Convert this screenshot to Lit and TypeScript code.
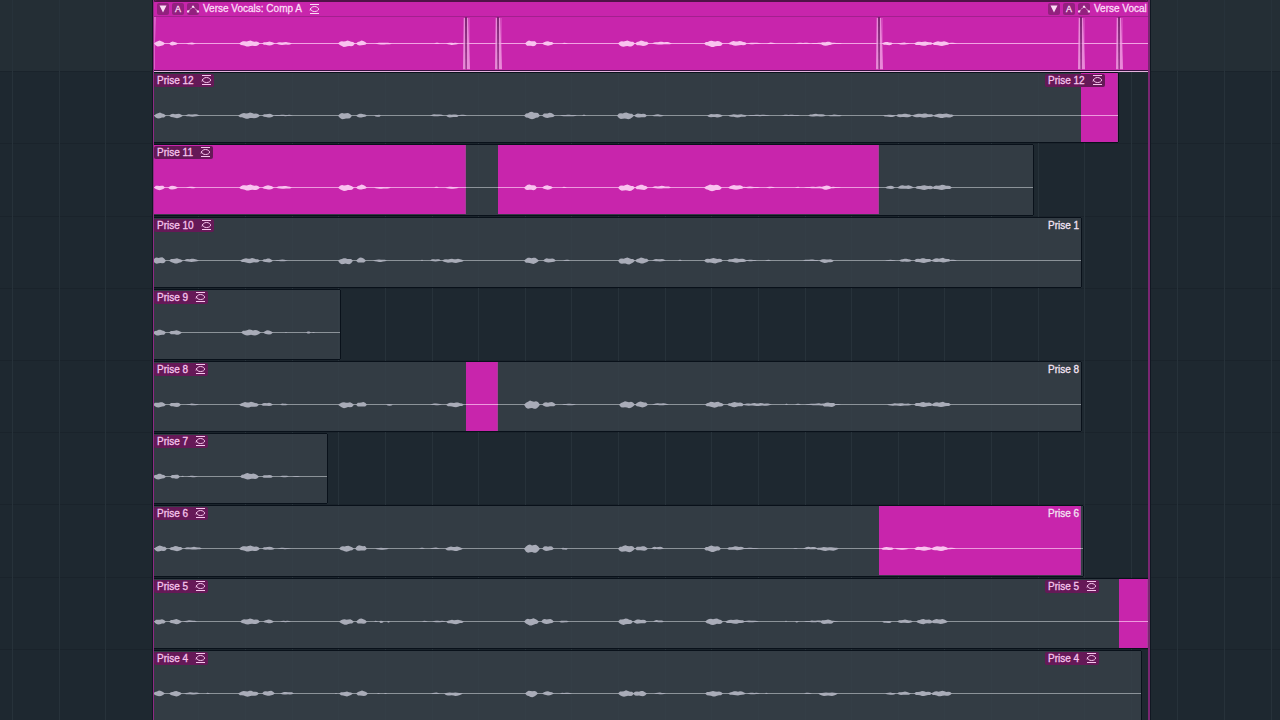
import { LitElement, html, svg, css, nothing } from "lit";
import { customElement, property } from "lit/decorators.js";

/** A burst of sound: start, end, height above and below the centre line. */
type Burst = [number, number, number, number];
type Range = [number, number];

interface Take {
  name: string;
  end: number;
  picked: Range[];
  repeat?: { text: string; tagged: boolean };
  bursts: Burst[];
}

/* Timeline units: the group runs from 154 to 1148, the loop restarts at 1046. */
const START = 154;
const END = 1148;
const SPAN = END - START;
const REPEAT = 1046;

const COMP: Burst[] = [
  [154, 165, 3, 3], [169, 178, 2, 2], [186, 196, 1, 1], [239, 260, 3, 3], [262, 275, 2, 2], [276, 292, 1.6, 1.4],
  [338, 355, 3, 3.5], [356, 367, 3, 2], [375, 392, 1, 1], [434, 440, 1, 0.5], [446, 459, 1, 1.3],
  [525, 537, 3.2, 3], [542, 554, 2.4, 2], [562, 568, 1, 0.5], [618, 635, 3, 3.5], [635, 649, 3, 2.5], [652, 672, 2, 1],
  [704, 723, 3, 3.5], [728, 747, 2.8, 2.2], [747, 761, 1, 0.7], [767, 776, 1, 0.5], [795, 811, 1, 0.5], [811, 842, 1, 0.7], [820, 833, 2, 2.2],
  [882, 893, 1.7, 1.7], [897, 910, 1, 1], [914, 933, 2.2, 2.2], [932, 950, 2.5, 2.3], [945, 957, 1, 0.5],
];

const TAKES: Take[] = [
  {
    name: "Prise 12", end: 1118, picked: [[1081, 1118]], repeat: { text: "Prise 12", tagged: true },
    bursts: [
      [154, 166, 3, 3], [169, 183, 2, 2.6], [185, 200, 1.6, 1], [238, 260, 3, 3.2], [262, 274, 2, 2], [274, 293, 1, 0.5],
      [338, 352, 3, 4], [356, 367, 2, 2], [374, 381, 1, 1.3], [430, 444, 1.4, 0.7], [446, 459, 1.3, 2], [458, 467, 1, 0.5],
      [524, 540, 4, 3.6], [542, 555, 3, 2.4], [560, 577, 1, 0.7], [582, 586, 1, 0.5], [617, 634, 3.2, 4], [634, 647, 2.4, 2.2], [652, 664, 1.3, 0.8],
      [707, 723, 1.8, 2], [728, 747, 1.4, 1.8], [748, 770, 1, 0.5], [781, 800, 1, 0.5], [808, 826, 1.8, 1], [828, 842, 1, 0.8],
      [883, 896, 1, 1.4], [896, 912, 2, 1.8], [912, 934, 2.2, 2.2], [933, 954, 2.2, 2.4],
    ],
  },
  {
    name: "Prise 11", end: 1033, picked: [[154, 466], [498, 879]],
    bursts: [
      [154, 165, 2.4, 2.6], [168, 178, 2, 2], [186, 196, 1, 0.7], [239, 260, 3, 3], [262, 274, 2.4, 2], [276, 292, 1.8, 1.2],
      [338, 354, 3, 3.5], [356, 367, 3, 2], [374, 391, 0.7, 1.2], [434, 439, 1, 0.5], [445, 459, 1, 1.2],
      [524, 537, 3.2, 3], [542, 553, 2.4, 2], [562, 567, 1, 0.5], [618, 635, 3, 3.7], [635, 648, 3, 2.5], [652, 671, 1.8, 1],
      [704, 722, 3.2, 3.6], [728, 744, 2.8, 2.2], [740, 760, 1, 0.7], [766, 775, 1, 0.5], [795, 800, 1, 0.5], [804, 841, 1, 0.8], [821, 832, 2.2, 2.2],
      [885, 895, 2, 1.4], [897, 914, 2.6, 1.5], [915, 934, 2.4, 2.3], [932, 952, 2.8, 2.3],
    ],
  },
  {
    name: "Prise 10", end: 1081, picked: [], repeat: { text: "Prise 1", tagged: false },
    bursts: [
      [153, 166, 3.8, 3.5], [169, 183, 2.4, 3], [184, 199, 2, 1.4], [240, 260, 2.6, 2.6], [262, 273, 2.2, 2], [275, 288, 1, 0.7],
      [338, 353, 2.4, 4.2], [356, 366, 3.2, 2.6], [373, 387, 1.2, 1.4], [421, 423, 1, 0.5], [430, 441, 1.7, 0.8], [442, 464, 2, 2.4],
      [524, 539, 3.3, 3.3], [543, 556, 2.5, 2], [563, 570, 1, 0.5], [618, 635, 3, 4], [635, 649, 3, 3], [652, 666, 1.8, 0.8], [678, 682, 1, 0.5],
      [704, 723, 2.6, 2.8], [727, 747, 2.4, 2], [744, 757, 1, 0.6], [765, 771, 1, 0.5], [803, 819, 1.2, 0.5], [819, 834, 1.6, 2.4],
      [885, 896, 0.8, 0.6], [899, 912, 2, 1.4], [914, 932, 2.5, 2.3], [931, 951, 2.8, 1.8], [948, 957, 1, 0.5],
    ],
  },
  {
    name: "Prise 9", end: 340, picked: [],
    bursts: [[153, 166, 3, 3.2], [169, 182, 2.4, 2.4], [241, 261, 3.2, 3.2], [263, 273, 2.4, 2], [285, 287, 1, 0.5], [306, 311, 1.3, 1], [312, 315, 1, 0.5]],
  },
  {
    name: "Prise 8", end: 1081, picked: [[466, 498]], repeat: { text: "Prise 8", tagged: false },
    bursts: [
      [153, 166, 2.6, 3], [169, 181, 2.2, 2.6], [186, 199, 1, 0.7], [239, 259, 2.8, 3], [261, 273, 2, 1.6], [280, 288, 1.2, 0.7],
      [338, 354, 2.6, 3.6], [356, 367, 2.7, 2.5], [386, 393, 0.7, 1.2], [430, 442, 1.2, 0.6], [446, 464, 2.2, 2.6],
      [524, 540, 4.2, 4.8], [542, 556, 2.8, 2.4], [562, 576, 1, 0.7], [619, 635, 3.4, 3.8], [635, 648, 3.2, 2.8], [652, 669, 1.4, 0.6],
      [705, 724, 3, 3], [727, 744, 2.6, 2.6], [743, 772, 1.6, 1.4], [785, 788, 1, 0.5], [795, 801, 1, 0.5], [805, 841, 1.3, 0.8], [822, 836, 2.2, 2.6],
      [887, 912, 1.4, 1.3], [914, 933, 2.6, 2.4], [931, 951, 2.8, 2.4],
    ],
  },
  {
    name: "Prise 7", end: 327, picked: [],
    bursts: [[153, 166, 3, 3], [170, 180, 2.2, 2.4], [181, 184, 1, 0.5], [187, 198, 0.9, 0.6], [240, 259, 3.6, 3], [262, 273, 1.9, 1.5], [280, 289, 1.2, 0.6], [292, 300, 0.8, 0.5]],
  },
  {
    name: "Prise 6", end: 1083, picked: [[879, 1081]], repeat: { text: "Prise 6", tagged: false },
    bursts: [
      [154, 167, 3, 3.2], [169, 183, 2.6, 2.6], [184, 202, 1.8, 1], [239, 260, 3, 3], [262, 275, 2, 1.4], [277, 291, 1, 0.5],
      [339, 354, 3, 3], [355, 367, 3.6, 2.6], [375, 389, 0.8, 1.2], [419, 425, 1, 0.5], [430, 440, 1, 0.5], [445, 463, 2.2, 2.5],
      [524, 540, 4.4, 4.8], [542, 554, 2.8, 2.4], [561, 568, 1, 1.4], [618, 635, 3.4, 3.8], [635, 648, 2.6, 2.4], [651, 664, 2, 0.7],
      [704, 721, 3, 3.4], [727, 745, 2.4, 1.6], [741, 759, 1, 0.5], [793, 798, 0.8, 0.5], [803, 818, 2, 0.7], [816, 839, 1.6, 2.4],
      [881, 894, 1.7, 1.6], [895, 909, 0.8, 1.2], [914, 932, 2.2, 2.2], [931, 949, 2.6, 2.4], [944, 956, 1, 0.5],
    ],
  },
  {
    name: "Prise 5", end: 1148, picked: [[1119, 1148]], repeat: { text: "Prise 5", tagged: true },
    bursts: [
      [154, 166, 2.5, 3], [169, 182, 2.5, 2.6], [183, 197, 1.4, 0.6], [240, 260, 3, 3], [263, 274, 2.2, 1.8], [280, 291, 1, 0.5],
      [339, 354, 2.6, 3.2], [356, 367, 3.2, 2.6], [374, 378, 1, 0.5], [379, 384, 0.8, 1.8], [387, 390, 0.7, 1], [422, 428, 1, 0.5], [432, 446, 1, 0.7], [446, 464, 2, 2.6],
      [524, 539, 3.5, 4], [541, 554, 3, 2.5], [559, 569, 1.2, 1], [618, 633, 3.2, 3.4], [633, 647, 2.4, 2.2], [653, 664, 1.6, 0.7],
      [705, 723, 3.3, 3.4], [725, 745, 2.2, 2.2], [741, 759, 1.2, 0.6], [785, 787, 1, 0.5], [795, 799, 0.8, 1], [804, 839, 1.2, 0.7], [820, 834, 2, 2.7],
      [882, 892, 0.8, 1.6], [897, 913, 2, 1.5], [916, 933, 2.6, 2.6], [931, 948, 2.8, 2.4],
    ],
  },
  {
    name: "Prise 4", end: 1141, picked: [], repeat: { text: "Prise 4", tagged: true },
    bursts: [
      [153, 165, 3, 2.6], [169, 182, 2.6, 2.8], [184, 200, 1.3, 1], [206, 210, 1, 0.5], [238, 259, 3, 3], [262, 275, 3, 2.2], [280, 294, 1.8, 1],
      [335, 337, 0.8, 0.5], [339, 353, 2, 2.8], [356, 368, 3, 2.7], [377, 380, 0.8, 0.5], [384, 387, 0.8, 0.5], [431, 440, 1, 0.5], [444, 463, 1.2, 2.4],
      [525, 538, 3.2, 3.6], [542, 554, 2.4, 1.8], [560, 572, 1, 0.5], [618, 634, 3.2, 3.2], [633, 647, 2.8, 2.8], [654, 666, 1, 0.6],
      [705, 723, 2.7, 3], [728, 746, 2.6, 1.8], [747, 760, 1, 0.7], [765, 768, 0.8, 0.5], [804, 812, 1, 0.5], [818, 838, 1.2, 2.6],
      [885, 896, 1, 1.3], [897, 911, 2, 1.5], [914, 932, 2.6, 2.4], [931, 952, 2.8, 2.8],
    ],
  },
];

const CROSSFADES = [466, 498, 879, 1081, 1119];

/** Outline of all bursts around the centre line, with a steady grain on each envelope. */
function envelope(bursts: Burst[], mid: number): string {
  return bursts
    .map(([from, to, up, down]) => {
      const steps = Math.max(3, Math.round((to - from) / 2));
      const top: string[] = [];
      const bottom: string[] = [];
      for (let i = 0; i <= steps; i++) {
        const t = i / steps;
        const x = from + (to - from) * t;
        const body = Math.pow(Math.sin(Math.PI * Math.min(1, Math.max(0, t))), 0.45);
        const grain = 0.86 + 0.16 * Math.sin(x * 0.9 + up * 5);
        const under = 0.86 + 0.16 * Math.cos(x * 0.7 + down * 3);
        top.push(`${x.toFixed(1)} ${(mid - up * body * grain).toFixed(2)}`);
        bottom.unshift(`${x.toFixed(1)} ${(mid + down * body * under).toFixed(2)}`);
      }
      return `M${top.join("L")}L${bottom.join("L")}Z`;
    })
    .join("");
}

const loopIcon = html`<svg class="loop" viewBox="0 0 11 11" aria-hidden="true">
  <path d="M1 .5H10M1 9.5H10" />
  <path d="M1 6.500C1.600 3.900 3 2.500 5.500 2.500S9.400 3.900 9.600 5C9.400 6.600 8 7.500 5.500 7.500S1.800 6.400 1.400 4.200" />
</svg>`;

const labelStyles = css`
  .loop {
    display: block;
    flex: none;
    width: 11px;
    height: 11px;
    fill: none;
    stroke: currentColor;
    stroke-width: 1;
  }
`;

@customElement("take-clip")
class TakeClip extends LitElement {
  @property({ attribute: false }) take!: Take;

  static styles = [
    labelStyles,
    css`
      :host {
        display: block;
        min-width: 0;
      }
      .clip {
        position: relative;
        height: 100%;
        overflow: hidden;
        background: rgb(55 64 72 / 0.86);
      }
      .frame {
        height: 100%;
        box-shadow: 0 -1px #09111a, 0 1px #09111a, 1px 0 #09111a;
      }
      .wide {
        box-shadow: 0 -1px #09111a, 0 1px #09111a;
      }
      .wave {
        display: block;
        width: 100%;
        height: 100%;
      }
      .axis {
        fill: #8c9399;
      }
      .sound {
        fill: #a9acb8;
      }
      .picked {
        fill: #c825ac;
      }
      .edge {
        fill: #a83d98;
      }
      .lit-axis {
        fill: #ee9ade;
      }
      .lit-sound {
        fill: #f9c3ef;
      }
      .label {
        position: absolute;
        top: 1px;
        display: flex;
        align-items: center;
        gap: 7px;
        height: 13px;
        padding: 0 2px 0 3px;
        border-radius: 2px;
        color: #f6c4ec;
        line-height: 13px;
        white-space: nowrap;
      }
      .tagged {
        background: #651957;
      }
      .plain {
        color: #f3e3f3;
      }
    `,
  ];

  render() {
    const { name, end, picked, repeat, bursts } = this.take;
    const width = end - START;
    const shape = envelope(bursts, 42.5);
    return html`<div class="frame ${end >= END ? "wide" : ""}">
      <div class="clip">
        <svg class="wave" viewBox="${START} 0 ${width} 69" preserveAspectRatio="none" aria-hidden="true">
          <rect class="axis" x=${START} y="42" width=${width} height="1" shape-rendering="crispEdges" />
          <path class="sound" d=${shape} />
          ${picked.map(
            ([from, to]) => svg`<svg x=${from} y="0" width=${to - from} height="69" viewBox="${from} 0 ${to - from} 69" preserveAspectRatio="none">
              <rect class="picked" x=${from} y="0" width=${to - from} height="69" />
              <rect class="edge" x=${to - 1} y="0" width="1" height="69" />
              <rect class="lit-axis" x=${from} y="42" width=${to - from} height="1" shape-rendering="crispEdges" />
              <path class="lit-sound" d=${shape} />
            </svg>`
          )}
        </svg>
        <span class="label tagged">${name}${loopIcon}</span>
        ${repeat
          ? html`<span class="label ${repeat.tagged ? "tagged" : "plain"}" style="left:${((REPEAT - 1 - START) / width) * 100}%"
              >${repeat.text}${repeat.tagged ? loopIcon : nothing}</span
            >`
          : nothing}
      </div>
    </div>`;
  }
}

@customElement("comp-clip")
class CompClip extends LitElement {
  static styles = [
    labelStyles,
    css`
      :host {
        display: flex;
        flex-direction: column;
        background: #c825ac;
        border-bottom: 1px solid #e5b3df;
        box-shadow: inset 0 -1px #3a1040;
        border-radius: 3px 3px 0 0;
        overflow: hidden;
      }
      .head {
        display: grid;
        grid-template-columns: 891fr 103fr;
        height: 17px;
        box-sizing: border-box;
        border-top: 2px solid #4f1247;
        border-bottom: 1px solid #a3208f;
      }
      .title {
        display: flex;
        align-items: center;
        gap: 3px;
        min-width: 0;
        overflow: hidden;
        padding-left: 3px;
        color: #fbdcf5;
        line-height: 12px;
        white-space: nowrap;
      }
      .tool {
        display: grid;
        flex: none;
        place-items: center;
        width: 12px;
        height: 12px;
        padding: 0;
        border: 0;
        border-radius: 2px;
        background: #93207f;
        color: inherit;
        font: inherit;
        font-size: 9px;
        line-height: 12px;
      }
      .tool svg {
        display: block;
        width: 12px;
        height: 10px;
        fill: currentColor;
      }
      .name {
        padding: 0 4px 0 1px;
      }
      .wave {
        display: block;
        flex: 1;
        min-height: 0;
        width: 100%;
      }
      .axis {
        fill: #f1a3e3;
      }
      .sound {
        fill: #f9c3ef;
      }
      .fade {
        fill: #f0a0e2;
      }
      .cut {
        fill: #6d2468;
      }
    `,
  ];

  private heading(text: string, loop: boolean) {
    return html`<div class="title">
      <button class="tool" aria-label="Collapse takes">
        <svg viewBox="0 0 12 10"><path d="M2.5 1.5H9.5L6 8.5Z" /></svg>
      </button>
      <button class="tool" aria-label="Comp A">A</button>
      <button class="tool" aria-label="Quick swipe">
        <svg viewBox="0 0 12 10">
          <path d="M0 6.500h2.200v2H0zM9.800 6.500H12v2H9.800zM4.900 1.800h2.200v2H4.900z" />
          <path d="M1.500 7L5.500 3M6.500 3L10.500 7" fill="none" stroke="currentColor" stroke-dasharray="1.500 .8" />
        </svg>
      </button>
      <span class="name">${text}</span>
      ${loop ? loopIcon : nothing}
    </div>`;
  }

  render() {
    return html`<div class="head">${this.heading("Verse Vocals: Comp A", true)}${this.heading("Verse Vocal", false)}</div>
      <svg class="wave" viewBox="${START} 0 ${SPAN} 54" preserveAspectRatio="none" aria-hidden="true">
        <rect class="axis" x=${START} y="26" width=${SPAN} height="1" shape-rendering="crispEdges" />
        <path class="sound" d=${envelope(COMP, 26.5)} />
        <path class="fade" d="M154 0H156L155 26V52H154Z" opacity=".5" />
        ${CROSSFADES.map(
          (x) => svg`<rect class="fade" x=${x - 3} y="1" width="7" height="51" opacity=".25" />
            <path class="fade" opacity=".75" d="M${x - 2} 1h1L${x} 52H${x - 3}ZM${x + 1} 1h1L${x + 4} 52H${x + 1}Z" />
            <path class="cut" d="M${x - 1} 0h2L${x + 0.5} 52h-1Z" opacity=".85" />`
        )}
      </svg>`;
  }
}

@customElement("app-root")
class AppRoot extends LitElement {
  static styles = css`
    :host {
      display: grid;
      height: 100vh;
      overflow: hidden;
      background: #1e2830;
      font: 400 10px/13px "Liberation Sans", Arial, sans-serif;
      -webkit-text-stroke: 0.3px currentColor;
      -webkit-font-smoothing: antialiased;
    }
    .tracks,
    .bars,
    .arrange {
      grid-area: 1 / 1;
      min-width: 0;
      height: calc(100vh + 2px);
    }
    .tracks,
    .group {
      display: grid;
      grid-template-rows: repeat(10, minmax(0, 1fr));
    }
    .track {
      box-sizing: border-box;
      border-bottom: 1px solid #1a232b;
    }
    .track:first-child {
      background: #242e35;
    }
    .bars {
      display: grid;
      grid-template-columns: 1200fr repeat(27, 4662fr) 926fr;
    }
    .bar + .bar {
      border-left: 1px solid #27323a;
    }
    .arrange {
      display: grid;
      grid-template-columns: 153fr 997fr 130fr;
    }
    .group {
      grid-column: 2;
      box-sizing: border-box;
      border: solid #7b2672;
      border-width: 0 2px 0 1px;
      border-left-color: #8e2a83;
      outline: 1px solid #101822;
      min-width: 0;
    }
    .take {
      padding: 1px 0 2px;
      min-width: 0;
    }
  `;

  render() {
    return html`
      <div class="tracks">${Array.from({ length: 10 }, () => html`<div class="track"></div>`)}</div>
      <div class="bars">${Array.from({ length: 29 }, () => html`<div class="bar"></div>`)}</div>
      <main class="arrange">
        <section class="group" aria-label="Verse Vocals">
          <comp-clip></comp-clip>
          ${TAKES.map(
            (take) => html`<take-clip class="take" .take=${take} style="width:${((take.end - START) / SPAN) * 100}%"></take-clip>`
          )}
        </section>
      </main>
    `;
  }
}
